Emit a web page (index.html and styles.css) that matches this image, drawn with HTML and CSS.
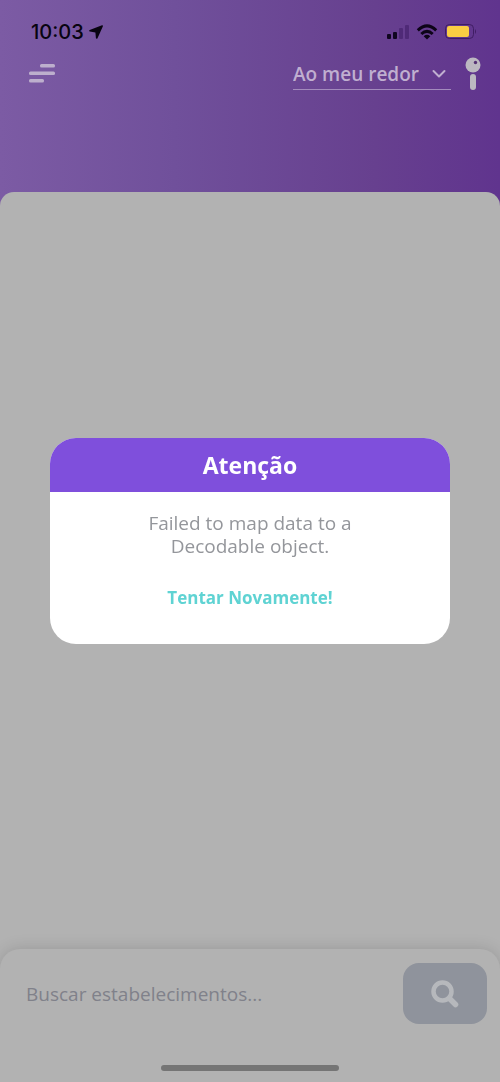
FILE: index.html
```html
<!DOCTYPE html>
<html lang="pt-BR">
<head>
<meta charset="utf-8">
<meta name="viewport" content="width=device-width, initial-scale=1">
<title>Estabelecimentos</title>
<link rel="stylesheet" href="styles.css">
</head>
<body>
<div class="app">
  <header class="header">
    <div class="status">
      <span class="clock">10:03
        <svg width="14" height="14" viewBox="0 0 14 14" aria-hidden="true"><path d="M13 .2.700 4.900c-.9.400-.8 1.600.2 1.700l5.500 1 .5 5.500c.1.900 1.200 1 1.600.2L13.900 1.200c.2-.7-.2-1.200-.9-1z" fill="#080410"/></svg>
      </span>
      <span class="signals">
        <svg width="22" height="16" viewBox="0 0 22 16" aria-hidden="true"><g fill="#100620"><rect x="0" y="10" width="4" height="5" rx="1"/><rect x="6" y="8" width="4" height="7" rx="1"/></g><g fill="#4f2a77"><rect x="12" y="4" width="4" height="11" rx="1"/><rect x="18" y="1" width="4" height="14" rx="1"/></g></svg>
        <svg width="22" height="16" viewBox="0 0 22 16" aria-hidden="true"><g fill="none" stroke="#0d0418" stroke-width="3"><path d="M1.800 6.300Q11-2.400 20.200 6.300"/><path d="M5.300 10Q11 4.700 16.700 10"/></g><path d="M7.700 12.200Q11 9.300 14.300 12.200L11 15.500z" fill="#0d0418"/></svg>
        <svg width="32" height="16" viewBox="0 0 32 16" aria-hidden="true"><rect x=".5" y=".5" width="28" height="14" rx="4" fill="none" stroke="#3f1d63"/><rect x="2" y="2" width="22" height="11" rx="2" fill="#fbcd43"/><path d="M30 5v5q2-2.500 0-5z" fill="#3f1d63"/></svg>
      </span>
    </div>
    <div class="toolbar">
      <button class="icon-button" type="button" aria-label="Menu">
        <svg width="26" height="20" viewBox="0 0 26 20"><g fill="#bdafcd"><rect x="11" y="0" width="15" height="3.500" rx="1.500"/><rect x="0" y="7.500" width="26" height="3.500" rx="1.500"/><rect x="0" y="15" width="15" height="3.500" rx="1.500"/></g></svg>
      </button>
      <div class="place">
        <select class="place-select" aria-label="Local"><option>Ao meu redor</option></select>
        <svg class="chevron" width="14" height="10" viewBox="0 0 14 10" aria-hidden="true"><path d="m1.500 2 5.500 5.500L12.500 2" fill="none" stroke="#c0afd0" stroke-width="2" stroke-linecap="round" stroke-linejoin="round"/></svg>
      </div>
      <button class="icon-button" type="button" aria-label="Mapa">
        <svg width="16" height="34" viewBox="0 0 16 34"><circle cx="8" cy="8" r="7.500" fill="#bcb8c1"/><rect x="5" y="17" width="6" height="16" rx="3" fill="#bcb8c1"/><circle cx="10.500" cy="5.500" r="1.700" fill="#553274"/></svg>
      </button>
    </div>
  </header>
  <main class="content"></main>
  <footer class="search-panel">
    <form class="search">
      <input class="search-input" type="text" aria-label="Buscar estabelecimentos" placeholder="Buscar estabelecimentos...">
      <button class="search-button" type="button" aria-label="Buscar">
        <svg width="28" height="28" viewBox="0 0 28 28"><circle cx="11.500" cy="11.500" r="9" fill="none" stroke="#b6b8bc" stroke-width="4.500"/><path d="m18.500 18.500 6 6" stroke="#b6b8bc" stroke-width="5.500" stroke-linecap="round"/></svg>
      </button>
    </form>
    <div class="home-indicator"></div>
  </footer>
</div>
<div class="overlay">
  <section class="alert" role="alertdialog" aria-labelledby="alert-title" aria-describedby="alert-text">
    <h1 class="alert-title" id="alert-title">Atenção</h1>
    <div class="alert-body">
      <p class="alert-text" id="alert-text">Failed to map data to a Decodable object.</p>
      <button class="alert-action" type="button">Tentar Novamente!</button>
    </div>
  </section>
</div>
</body>
</html>
```
FILE: styles.css
```css
* { box-sizing: border-box; }
body { margin: 0; font-family: "Open Sans", sans-serif; }
button, input, select { margin: 0; padding: 0; border: 0; background: none; font: inherit; color: inherit; }
svg { display: block; }

.app {
  display: flex;
  flex-direction: column;
  min-height: 100vh;
  background: #b2b2b2 linear-gradient(90deg, #7c5ba4, #70509b 35%, #67408f 75%, #60348e) no-repeat;
  background-size: 100% 220px;
}
.header { padding: 20px 19px 98px 29px; }
.status { display: flex; justify-content: space-between; align-items: center; height: 24px; padding-left: 2px; }
.clock { display: flex; align-items: center; gap: 5px; font: 500 20px/24px Inter, sans-serif; color: #080410; }
.signals { display: flex; align-items: center; gap: 7px; padding-right: 4px; }
.toolbar { display: flex; align-items: center; height: 40px; margin-top: 10px; }
.icon-button { cursor: pointer; }
.place {
  display: flex;
  align-items: center;
  justify-content: space-between;
  width: 158px;
  height: 31px;
  margin-left: auto;
  margin-right: 14px;
  padding-right: 5px;
  border-bottom: 1px solid #a38bbd;
}
.place-select { appearance: none; font-size: 19px; line-height: 28px; font-weight: 600; color: #c0afd0; }

.content { flex: 1; border-radius: 14px 14px 0 0; background: #b2b2b2; }
.search-panel {
  padding: 14px 0 11px;
  border-radius: 20px 20px 0 0;
  background: #b2b2b2;
  box-shadow: 0 0 16px rgba(0, 0, 0, .15);
}
.search { display: flex; align-items: center; gap: 16px; padding: 0 13px 0 26px; }
.search-input { flex: 1; min-width: 0; font-size: 19px; line-height: 28px; color: #80818a; }
.search-input::placeholder { color: #80818a; opacity: 1; }
.search-button {
  display: grid;
  place-items: center;
  width: 84px;
  height: 61px;
  border-radius: 16px;
  background: #8f939c;
}
.home-indicator { width: 178px; height: 6px; margin: 41px auto 0; border-radius: 3px; background: #757575; }

.overlay { position: fixed; inset: 0; display: grid; place-items: center; padding: 0 50px; }
.alert { width: 100%; overflow: hidden; border-radius: 26px; background: #fff; text-align: center; }
.alert-title { margin: 0; padding: 13px; background: #7f4fdc; color: #fff; font-size: 23px; line-height: 28px; font-weight: 700; }
.alert-body { padding: 20px 80px 32px; }
.alert-text { margin: 0 0 26px; font-size: 19px; line-height: 23px; color: #94969b; }
.alert-action { font-size: 17px; line-height: 28px; font-weight: 700; color: #5fd3d3; cursor: pointer; }
```
